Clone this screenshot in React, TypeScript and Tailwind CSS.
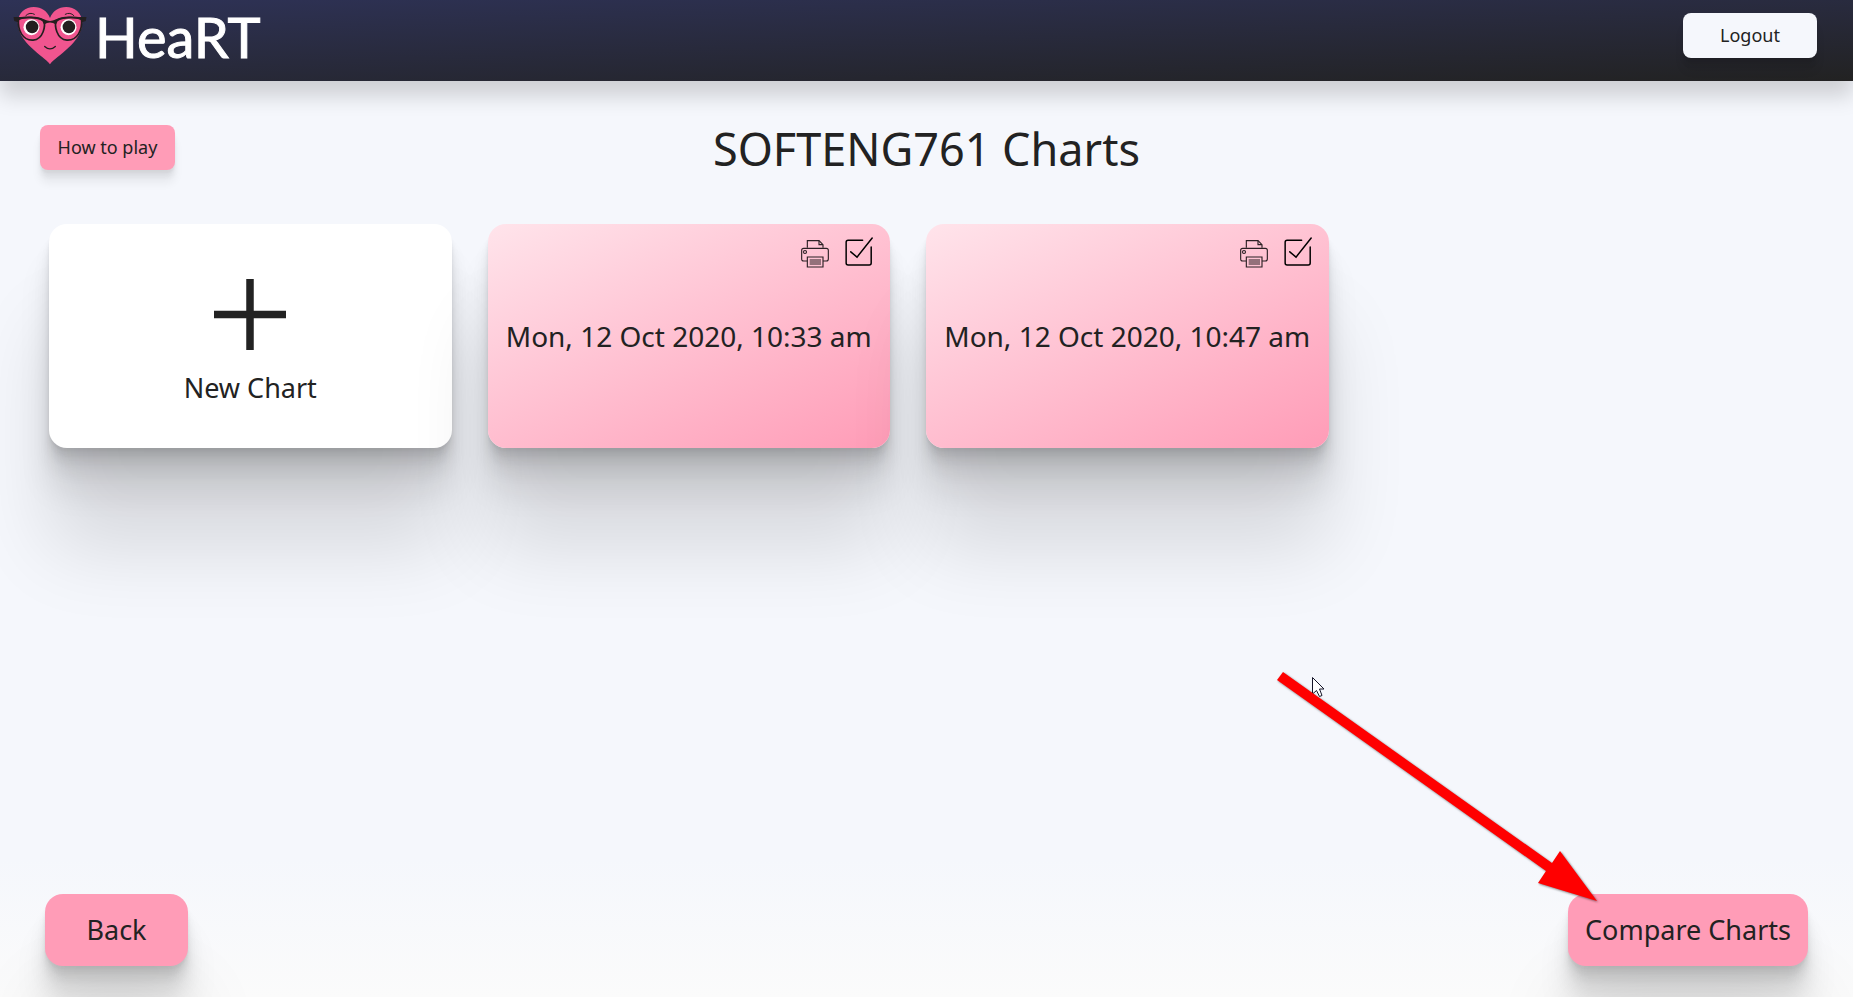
import React from "react";

const softShadow =
  "shadow-[0_3px_2px_rgba(0,0,0,0.034),0_7px_5px_rgba(0,0,0,0.048),0_13px_10px_rgba(0,0,0,0.06)]";
const deepShadow =
  "shadow-[0_3px_2px_rgba(0,0,0,0.034),0_7px_5px_rgba(0,0,0,0.048),0_13px_10px_rgba(0,0,0,0.06),0_22px_18px_rgba(0,0,0,0.072),0_42px_33px_rgba(0,0,0,0.086),0_100px_80px_rgba(0,0,0,0.12)]";

const charts = ["Mon, 12 Oct 2020, 10:33 am", "Mon, 12 Oct 2020, 10:47 am"];

function HeartLogo() {
  return (
    <svg viewBox="0 0 222 178" className="h-[59px] w-[74px]" aria-hidden="true">
      <path
        d="M111 176C92 150 14 112 14 50C14 20 38 3 62 3C86 3 103 16 111 36C119 16 136 3 160 3C184 3 208 20 208 50C208 112 130 150 111 176Z"
        fill="#f0558f"
      />
      <path d="M38 29Q50 17 64 25M157 25Q172 17 183 29" fill="none" stroke="#231f20" strokeWidth="3" strokeLinecap="round" />
      <circle cx="55" cy="64" r="24" fill="#fff" />
      <circle cx="167" cy="64" r="24" fill="#fff" />
      <circle cx="57" cy="63" r="19" fill="#231f20" />
      <circle cx="168" cy="63" r="19" fill="#231f20" />
      <path
        d="M16 40C32 32 74 32 92 43C98 58 92 100 60 103C28 105 13 72 16 40Z M206 40C190 32 148 32 130 43C124 58 130 100 162 103C194 105 209 72 206 40Z"
        fill="none"
        stroke="#231f20"
        strokeWidth="5"
      />
      <path d="M1 33C25 34 60 27 94 41Q111 49 128 41C162 27 197 34 221 33L219 45L207 49L203 41C180 35 150 36 134 46L129 56Q111 44 93 56L88 46C72 36 42 35 19 41L15 49L3 45Z" fill="#231f20" />
      <path d="M95 122Q111 137 127 122" fill="none" stroke="#231f20" strokeWidth="4" strokeLinecap="round" />
    </svg>
  );
}

function PrinterIcon() {
  return (
    <svg viewBox="0 0 84 84" className="size-7" fill="none" stroke="#2b2024" strokeWidth="3.4" aria-hidden="true">
      <path d="M19 23V2H54L66 14V23" />
      <path d="M54 2V14H66" />
      <path d="M19 63H8Q2 63 2 57V31Q2 25 8 25H76Q82 25 82 31V57Q82 63 76 63H66" />
      <circle cx="12" cy="36" r="4.5" />
      <path d="M19 51H66V81H19Z" />
      <path d="M26 60H60M26 66H60M26 72H60" />
    </svg>
  );
}

function CheckIcon() {
  return (
    <svg viewBox="0 0 84 88" className="h-[29px] w-7" fill="none" stroke="#000" strokeWidth="4.5" strokeLinecap="round" aria-hidden="true">
      <path d="M53 10H9Q3 10 3 16V79Q3 85 9 85H73Q79 85 79 79V30" />
      <path d="M17 45L36 61L82 3" />
    </svg>
  );
}

function Pointer() {
  return (
    <svg viewBox="0 0 335 245" className="pointer-events-none absolute -left-[298px] -top-[229px] h-[245px] w-[335px]" aria-hidden="true">
      <path d="M42.5 12.5V29L46.5 25.5L49.5 31.5L52 30.5L49.5 24H54Z" fill="#fff" stroke="#151528" strokeWidth="1" />
      <path
        d="M13 7L282 198L290 186L327 236L268 218L276 206L7 15Z"
        fill="#f00"
        className="drop-shadow-[1px_1px_1px_rgba(0,0,0,0.5)]"
      />
    </svg>
  );
}

export default function App() {
  return (
    <div className="flex min-h-screen flex-col overflow-hidden bg-[#f5f7fc] font-['Noto_Sans',sans-serif] text-[#222222]">
      <header className="flex h-[81px] items-start justify-between bg-linear-[178deg,#2e3256,#222222] pl-[13px] pr-9 shadow-[0_15px_20px_rgba(0,0,0,0.16)]">
        <a href="#home" className="flex items-start gap-2 pt-[6px]">
          <HeartLogo />
          <span className="font-['Lato',sans-serif] text-[56px] leading-[62px] text-white [-webkit-text-stroke:1px_white]">
            HeaRT
          </span>
        </a>
        <button type="button" className={`mt-[13px] h-[45px] w-[134px] rounded-lg bg-[#f5f7fc] pb-[2px] text-lg ${softShadow}`}>
          Logout
        </button>
      </header>

      <main className="flex flex-1 flex-col">
        <div className="grid grid-cols-[1fr_auto_1fr] items-start px-10 pt-11">
          <button type="button" className={`h-[45px] w-[135px] rounded-lg bg-[#ff9cb7] pb-[2px] text-lg ${softShadow}`}>
            How to play
          </button>
          <h1 className="text-[45px] leading-[48px]">SOFTENG761 Charts</h1>
        </div>

        <div className="grid grid-cols-4 gap-9 pl-[49px] pr-[86px] pt-[51px]">
          <button
            type="button"
            className={`flex h-56 flex-col items-center rounded-[18px] bg-white pt-[55px] text-[27px] ${deepShadow}`}
          >
            <svg viewBox="0 0 72 71" className="h-[71px] w-[72px]" stroke="#222222" strokeWidth="7.5" aria-hidden="true">
              <path d="M36 0V71M0 35.5H72" />
            </svg>
            <span className="mt-5 leading-9">New Chart</span>
          </button>
          {charts.map((date) => (
            <article
              key={date}
              className={`relative flex h-56 items-center justify-center rounded-[18px] bg-linear-[155deg,#ffe4eb,#ff9cb7] ${deepShadow}`}
            >
              <a href="#chart" className="whitespace-nowrap text-[28px]">
                {date}
              </a>
              <div className="absolute right-[17px] top-[13px] flex items-start gap-4">
                <button type="button" aria-label="Print chart" className="pt-[3px]">
                  <PrinterIcon />
                </button>
                <button type="button" aria-label="Select chart">
                  <CheckIcon />
                </button>
              </div>
            </article>
          ))}
        </div>
      </main>

      <footer className="flex justify-between bg-linear-to-b from-[#f5f7fc] to-[#fbfbfb] px-[45px] pb-[31px] pt-9">
        <button type="button" className={`h-[72px] w-[143px] rounded-[18px] bg-[#ff9cb7] text-[27px] ${deepShadow}`}>
          Back
        </button>
        <div className="relative">
          <button type="button" className={`h-[72px] w-60 rounded-[18px] bg-[#ff9cb7] text-[27px] ${deepShadow}`}>
            Compare Charts
          </button>
          <Pointer />
        </div>
      </footer>
    </div>
  );
}
